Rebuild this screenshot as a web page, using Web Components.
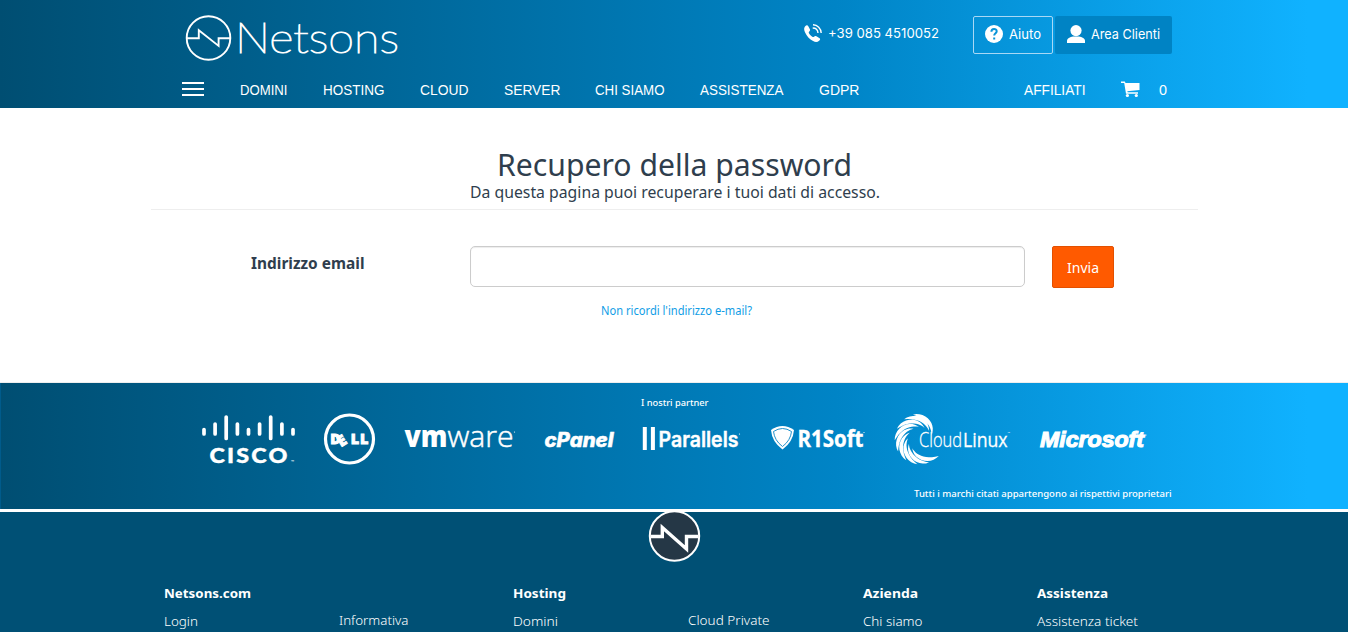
<!DOCTYPE html>
<html lang="it">
<head>
<meta charset="utf-8">
<title>Netsons - Recupero della password</title>
<style>
html,body{margin:0;height:100%;overflow:hidden;background:#fff}
body{font-family:"Noto Sans","Open Sans",sans-serif;color:#2f3e4d}
</style>
</head>
<body>
<netsons-page></netsons-page>

<script>
const BLUE = 'linear-gradient(to right,#004e72 0%,#0084c6 62%,#10b2ff 97%)';

/* One line of text set to an exact width: w, h = box, b = baseline, s = font size */
class FitText extends HTMLElement {
  connectedCallback() {
    const a = (n, d) => this.getAttribute(n) || d;
    const w = a('w', '50'), h = a('h', '20');
    this.attachShadow({mode: 'open'}).innerHTML = `
      <style>:host{display:block;flex:none;width:${w}px;height:${h}px}
      svg{display:block;overflow:visible}
      text{font-family:${a('f', '"Noto Sans"')},sans-serif;font-size:${a('s', '14')}px;font-weight:${a('wt', '400')};fill:currentColor}</style>
      <svg width="${w}" height="${h}"><text x="0" y="${a('b', '15')}" textLength="${w}" lengthAdjust="spacingAndGlyphs">${this.textContent}</text></svg>`;
  }
}
customElements.define('fit-text', FitText);

class SiteHeader extends HTMLElement {
  constructor() {
    super();
    this.attachShadow({mode: 'open'}).innerHTML = `
    <style>
      :host{display:block;height:108px;background:${BLUE};color:#fff}
      .wrap{width:991px;margin-left:181px}
      .top{display:flex;align-items:flex-start;height:78px}
      .brand{margin:12px 0 0 4px;display:block}
      .phone{display:flex;margin-left:403px;padding-top:24px;gap:6px}
      .btns{display:flex;gap:2px;margin:16px 0 0 34px}
      .btn{box-sizing:border-box;height:38px;display:flex;padding-top:9px;border-radius:2px}
      .help{width:80px;border:1px solid #a9d8f5;padding:8px 0 0 11px;gap:6px}
      .area{width:117px;background:#0083c4;padding-left:12px;gap:6px}
      svg{display:block;flex:none}
      nav{display:flex;height:30px;color:#fff}
      .burger{width:22px;height:14px;margin:4px 36px 0 1px;display:flex;flex-direction:column;justify-content:space-between}
      .burger i{height:2px;background:#fff}
      .links{display:grid;grid-template-columns:83px 97px 84px 91px 105px 119px 205px 97px auto}
      .cart{display:flex;gap:19px}
    </style>
    <div class="wrap">
      <div class="top">
        <svg class="brand" width="216" height="52" viewBox="185 12 216 52" fill="none" stroke="#fff" stroke-width="1.9">
          <circle cx="208.5" cy="38" r="21.8"/>
          <path d="M187 38.3h11.8v-8l19.8 15.600v-7.600h11.800"/>
          <text x="235" y="53" textLength="164" lengthAdjust="spacingAndGlyphs" font-family="Lato,sans-serif" font-weight="100" font-size="42.500" fill="#fff" stroke-width="1.200">Netsons</text>
        </svg>
        <div class="phone">
          <svg width="18" height="18" viewBox="0 0 18 18"><path fill="#fff" d="M1 2.5C2.4.9 3.600 1 4.300 2.300l1.600 3c.5 1 .1 1.700-.8 2.400-.5.5-.4 1 0 1.700.9 1.500 1.800 2.400 3.200 3.300.8.5 1.200.5 1.700 0 .8-.9 1.500-1 2.400-.5l2.800 1.700c1.300.8 1.200 1.700-.1 2.900-1.600 1.500-3.800 1.500-6 .3C5.500 15.200 2.700 12 1.100 8.500.1 6.200-.4 4.200 1 2.500z"/><path d="M9 .8c4.500.1 8 3.600 8.200 8.200M8.700 4c2.900 0 5.100 2.100 5.300 5" stroke="#fff" stroke-width="1.400" fill="none"/></svg>
          <fit-text w="111" h="18" b="14.300" s="13" f="Inter">+39 085 4510052</fit-text>
        </div>
        <div class="btns">
          <div class="btn help"><svg width="18" height="18"><circle cx="9" cy="9" r="9" fill="#fff"/><path d="M6.400 6.700C6.400 3 11.700 3.200 11.700 6.300c0 2-2.500 1.900-2.500 4.300M9.200 12.500v2" fill="none" stroke="#0894d8" stroke-width="2"/></svg><fit-text w="32" h="18" b="14.300" s="13.500" f="Inter">Aiuto</fit-text></div>
          <div class="btn area"><svg width="18" height="18" fill="#fff"><circle cx="9" cy="5.600" r="5.600"/><path d="M0 18v-2c0-3 3-4 6-4.600h6c3 .6 6 1.600 6 4.600v2z"/></svg><fit-text w="69" h="18" b="14.300" s="13.500" f="Inter">Area Clienti</fit-text></div>
        </div>
      </div>
      <nav>
        <div class="burger"><i></i><i></i><i></i></div>
        <div class="links">
          <fit-text w="47.500" h="24" b="17" s="14" f="Liberation Sans">DOMINI</fit-text>
          <fit-text w="61.500" h="24" b="17" s="14" f="Liberation Sans">HOSTING</fit-text>
          <fit-text w="48.500" h="24" b="17" s="14" f="Liberation Sans">CLOUD</fit-text>
          <fit-text w="56.500" h="24" b="17" s="14" f="Liberation Sans">SERVER</fit-text>
          <fit-text w="69.500" h="24" b="17" s="14" f="Liberation Sans">CHI SIAMO</fit-text>
          <fit-text w="83.500" h="24" b="17" s="14" f="Liberation Sans">ASSISTENZA</fit-text>
          <fit-text w="40.500" h="24" b="17" s="14" f="Liberation Sans">GDPR</fit-text>
          <fit-text w="61.500" h="24" b="17" s="14" f="Liberation Sans">AFFILIATI</fit-text>
          <div class="cart"><svg width="19" height="20" viewBox="0 0 19 20" fill="#fff"><path d="M0 3.500h3.800l.7 1.500H18.500v7L6.300 13.200l.4 1h10.300v1.500H5L3.200 5H0z"/><circle cx="6.400" cy="17.500" r="1.600"/><circle cx="15.300" cy="17.500" r="1.600"/></svg><fit-text w="8" h="24" b="17" s="14" f="Liberation Sans">0</fit-text></div>
        </div>
      </nav>
    </div>`;
  }
}
customElements.define('site-header', SiteHeader);

class RecoveryForm extends HTMLElement {
  constructor() {
    super();
    this.attachShadow({mode: 'open'}).innerHTML = `
    <style>
      :host{display:block;box-sizing:border-box;height:274px;width:1047px;margin-left:151px;padding-top:32px;color:#2f3e4d}
      .head{display:flex;flex-direction:column;align-items:center;height:69px;border-bottom:1px solid #eee}
      .row{display:flex;padding-top:36px;height:42px}
      .label{width:219px;padding-left:100px}
      input{box-sizing:border-box;width:555px;height:41px;margin:0 27px 0 0;border:1px solid #ccc;border-radius:5px;box-shadow:inset 0 1px 1px rgba(0,0,0,.075);background:#fff}
      button{box-sizing:border-box;width:62px;height:42px;padding:0 0 0 14px;border:1px solid #e35000;border-radius:2px;background:#ff5a00;color:#fff}
      .link{padding:12px 0 0 450px;color:#109de6}
    </style>
    <div class="head">
      <fit-text w="355" h="42" b="36.200" s="31.500">Recupero della password</fit-text>
      <fit-text w="410" h="24" b="16.300" s="16.500">Da questa pagina puoi recuperare i tuoi dati di accesso.</fit-text>
    </div>
    <div class="row">
      <div class="label"><fit-text w="113.500" h="30" b="23" s="15.500" wt="700">Indirizzo email</fit-text></div>
      <input type="email">
      <button><fit-text w="32" h="24" b="17.500" s="14.500">Invia</fit-text></button>
    </div>
    <div class="link"><fit-text w="151" h="20" b="15" s="11.800">Non ricordi l'indirizzo e-mail?</fit-text></div>`;
  }
}
customElements.define('recovery-form', RecoveryForm);

/* Crescent that spirals clockwise from the outer ring towards the centre */
function crescent(cx, cy, start, sweep, r0, r1, thick) {
  const out = [], inn = [];
  for (let i = 0; i <= 12; i++) {
    const t = i / 12, a = (start + sweep * t) * Math.PI / 180;
    const r = r0 + (r1 - r0) * t * t * (1.6 - .6 * t), w = thick * Math.sin(Math.PI * Math.pow(t, .8));
    out.push(`${(cx + r * Math.cos(a)).toFixed(1)} ${(cy + r * Math.sin(a)).toFixed(1)}`);
    inn.unshift(`${(cx + (r - w) * Math.cos(a)).toFixed(1)} ${(cy + (r - w) * Math.sin(a)).toFixed(1)}`);
  }
  return 'M' + out.concat(inn).join('L') + 'z';
}

class PartnerStrip extends HTMLElement {
  constructor() {
    super();
    const bars = [[204,429.500,434],[215.100,424,434],[226.200,417,438.500],[237.400,424,434],[248.500,429.500,434],[259.600,424,434],[270.700,417,438.500],[281.900,424,434],[293,429.500,434]];
    const barPath = bars.map(([x, a, b]) => `M${x} ${a}V${b}`).join('');
    const swirl = [42,69,96,123,150,177,204,231,254].map(s => crescent(920, 439, s, 88, 25.300, 12, 4.300)).join('');
    this.attachShadow({mode: 'open'}).innerHTML = `
    <style>
      :host{display:block;box-sizing:border-box;height:130px;border-top:1px solid #eee;border-bottom:3px solid #fff;background:${BLUE};box-shadow:inset 1px 0 #005b8b;color:#fff}
      .title{padding:9px 0 0 641px;height:20px}
      .logos{display:flex;padding-left:200px;height:54px}
      .note{padding:14px 0 0 914px}
      svg{display:block;flex:none;fill:#fff;overflow:visible}
      .o{font-family:"Open Sans",sans-serif}
    </style>
    <div class="title"><fit-text w="67.500" h="20" b="14" s="9.300" wt="500">I nostri partner</fit-text></div>
    <div class="logos">
      <svg width="122" height="54" viewBox="200 412 122 54"><path d="${barPath}" stroke="#fff" stroke-width="3.700" stroke-linecap="round"/><text x="209.500" y="462.500" font-family="Lato" textLength="80" lengthAdjust="spacingAndGlyphs" letter-spacing="2" font-size="21.500" font-weight="900" stroke="#fff" stroke-width=".4">CISCO</text><text x="291" y="463" font-size="4" font-family="Noto Sans">™</text></svg>
      <svg width="81" height="54" viewBox="322 412 81 54"><circle cx="349.500" cy="439" r="24" fill="none" stroke="#fff" stroke-width="3.200"/><text class="o" y="443.800" font-size="14.300" font-weight="800" stroke="#fff" stroke-width=".9"><tspan x="330.300">D</tspan><tspan x="341" y="447.300" rotate="-32" font-size="14.800">E</tspan><tspan x="350.800 360" y="443.800">LL</tspan></text></svg>
      <svg width="140" height="54" viewBox="403 412 140 54"><text y="446.500" font-family="Open Sans" font-size="29.500"><tspan x="404.500" font-weight="800" textLength="43" lengthAdjust="spacingAndGlyphs">vm</tspan><tspan x="447.500" font-weight="300" textLength="66" lengthAdjust="spacingAndGlyphs" stroke="#fff" stroke-width=".5">ware</tspan></text><circle cx="514.500" cy="432" r=".6"/></svg>
      <svg width="98" height="54" viewBox="543 412 98 54"><text x="544.500" y="446.500" font-family="Inter" font-size="20" font-weight="800" font-style="italic" textLength="69" lengthAdjust="spacingAndGlyphs" stroke="#fff" stroke-width=".5">cPanel</text></svg>
      <svg width="128" height="54" viewBox="641 412 128 54"><path d="M642.800 427h4v23h-4zM650.900 427h4v23h-4z"/><text x="658.500" y="447" font-family="Inter" font-size="21.500" font-weight="600" textLength="80" lengthAdjust="spacingAndGlyphs" stroke="#fff" stroke-width=".4">Parallels</text><circle cx="739.500" cy="434" r=".6"/></svg>
      <svg width="124" height="54" viewBox="769 412 124 54"><path d="M771 430Q782.500 422 794 430Q793 442 782.500 449.500Q772 442 771 430z"/><path d="M773.500 431.500Q782.500 425.500 791.500 431.500Q790.500 440.500 782.500 446.500Q774.500 440.500 773.500 431.500z" fill="none" stroke="#2493cc" stroke-width="1"/><text x="797.500" y="446.500" class="o" font-size="22.500" font-weight="700" textLength="66" lengthAdjust="spacingAndGlyphs" stroke="#fff" stroke-width=".4">R1Soft</text><circle cx="864" cy="432.500" r=".6"/></svg>
      <svg width="145" height="54" viewBox="893 412 145 54"><path d="${swirl}"/><text y="447" class="o" font-size="20.500"><tspan x="919" font-weight="300" textLength="43" lengthAdjust="spacingAndGlyphs" stroke="#fff" stroke-width=".3">Cloud</tspan><tspan x="963" font-weight="500" textLength="44.500" lengthAdjust="spacingAndGlyphs" stroke="#fff" stroke-width=".3">Linux</tspan></text><text x="1007.500" y="434" font-size="3">™</text></svg>
      <svg width="110" height="54" viewBox="1038 412 110 54"><text x="1040" y="446.700" font-family="Liberation Sans" font-size="22" font-weight="700" font-style="italic" textLength="104" lengthAdjust="spacingAndGlyphs" stroke="#fff" stroke-width="1.100">Microsoft</text><circle cx="1146" cy="435" r=".6"/></svg>
    </div>
    <div class="note"><fit-text w="257.500" h="20" b="17" s="9.300" wt="500">Tutti i marchi citati appartengono ai rispettivi proprietari</fit-text></div>`;
  }
}
customElements.define('partner-strip', PartnerStrip);

class SiteFooter extends HTMLElement {
  constructor() {
    super();
    const cols = [['Netsons.com',87,'Login',34],['',0,'Informativa',69.500],['Hosting',53,'Domini',45],['',0,'Cloud Private',81.500],['Azienda',55,'Chi siamo',59.500],['Assistenza',71,'Assistenza ticket',101]];
    this.attachShadow({mode: 'open'}).innerHTML = `
    <style>
      :host{display:block;height:120px;background:#005075;color:#fff}
      .badge{display:block;margin:0 auto;position:relative;top:-2px;overflow:visible}
      .cols{display:grid;grid-template-columns:repeat(6,174.700px);padding:20px 0 0 164px}
      .l{padding-top:8px}
      .up{padding-top:27px}
    </style>
    <svg class="badge" width="52" height="52"><circle cx="26.500" cy="26" r="24.700" fill="#253746" stroke="#fff" stroke-width="2"/><path d="M2.500 26.500h11.800v-9L38.500 39v-12.500h12" fill="none" stroke="#fff" stroke-width="3.400"/></svg>
    <div class="cols">${cols.map(([t,tw,l,lw]) => `<div>${t ? `<fit-text w="${tw}" h="20" b="14" s="13" wt="700">${t}</fit-text><div class="l">` : '<div class="l up">'}<fit-text w="${lw}" h="20" b="14" s="13" wt="300">${l}</fit-text></div></div>`).join('')}</div>`;
  }
}
customElements.define('site-footer', SiteFooter);

class NetsonsPage extends HTMLElement {
  constructor() {
    super();
    this.attachShadow({mode: 'open'}).innerHTML = `
    <style>:host{display:block;width:1348px;height:632px;overflow:hidden}</style>
    <site-header></site-header><recovery-form></recovery-form><partner-strip></partner-strip><site-footer></site-footer>`;
  }
}
customElements.define('netsons-page', NetsonsPage);
</script>
</body>
</html>
